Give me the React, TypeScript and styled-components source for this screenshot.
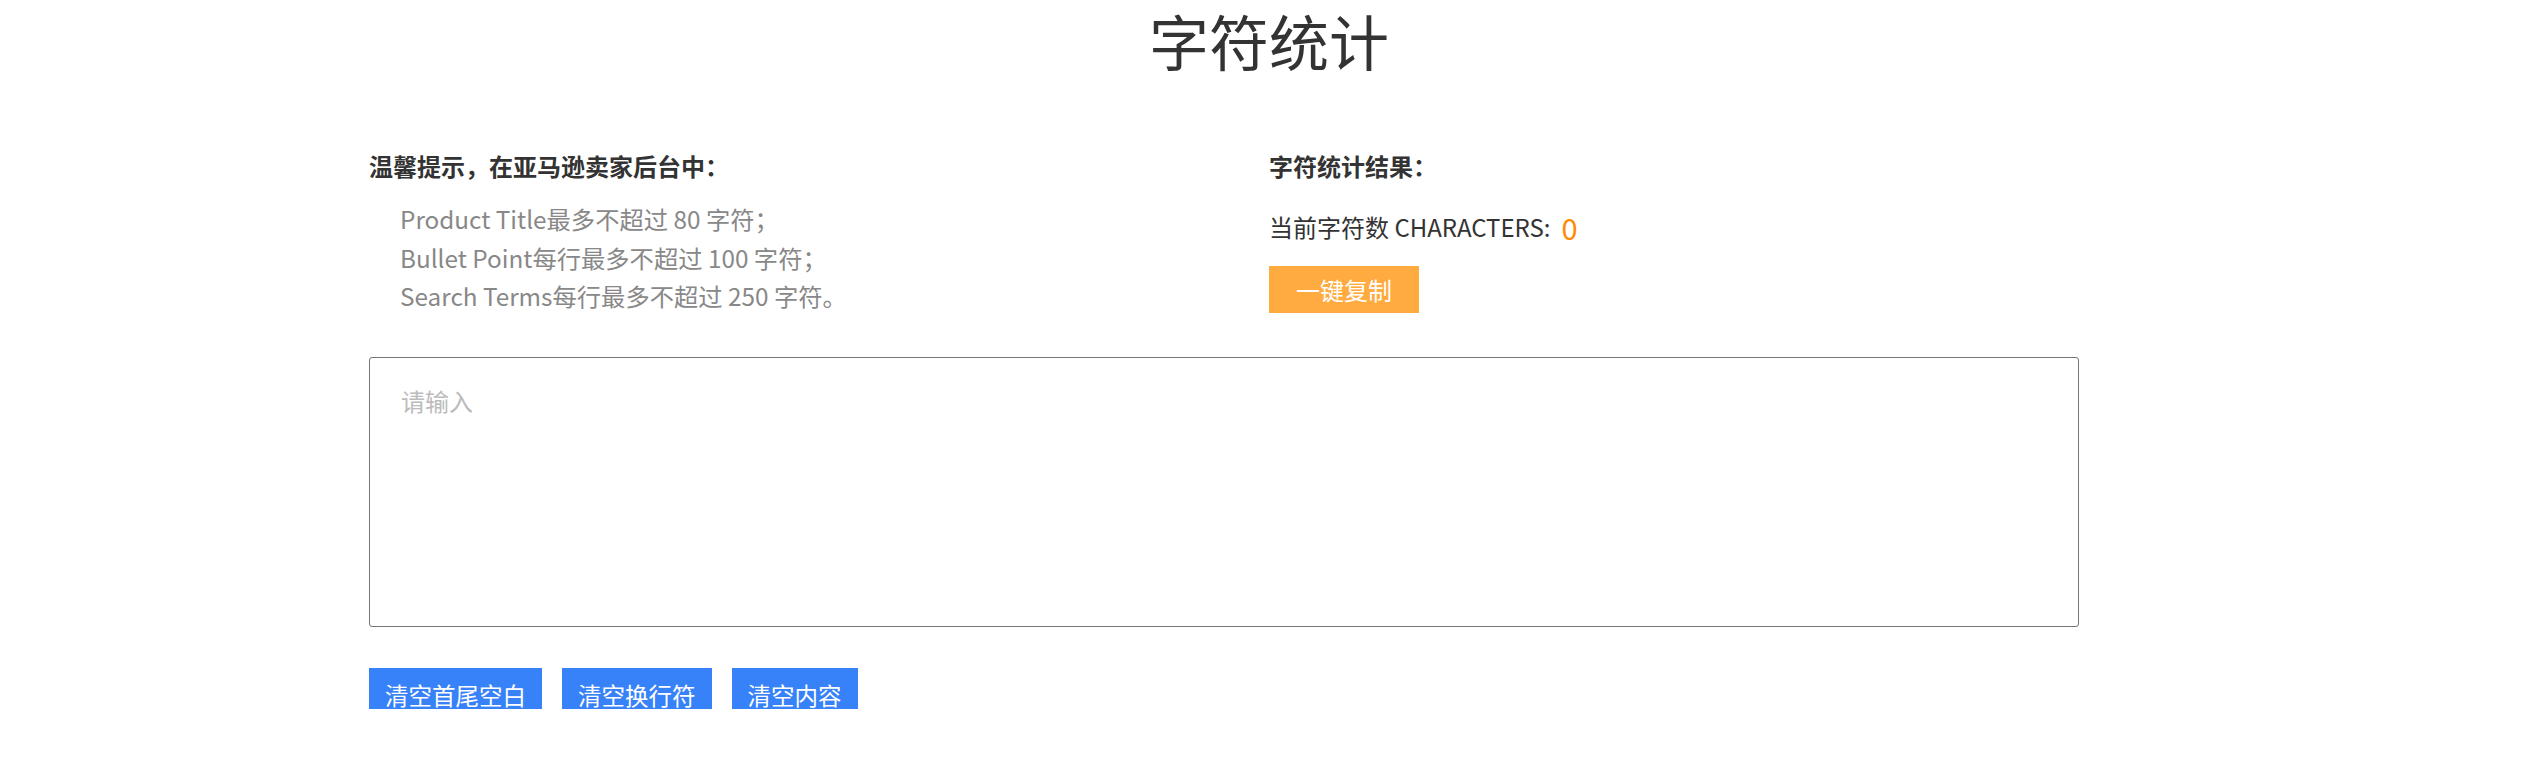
import React, { useState } from "react";
import styled, { createGlobalStyle } from "styled-components";

const GlobalStyle = createGlobalStyle`
  body {
    margin: 0;
    background: #fff;
    font-family: "Noto Sans CJK SC", "Noto Sans", sans-serif;
    color: #333;
  }
`;

const Title = styled.h1`
  margin: 0;
  text-align: center;
  font-size: 60px;
  font-weight: 400;
  line-height: 80px;
  color: #333;
`;

const Container = styled.div`
  width: 1800px;
  margin: 0 auto;
  padding-top: 69px;
`;

const InfoRow = styled.div`
  display: flex;
`;

const Column = styled.div`
  width: 50%;
`;

const Heading = styled.div`
  font-size: 24px;
  font-weight: 700;
  line-height: 34px;
  color: #333;
`;

const TipList = styled.div`
  margin-top: 17px;
  padding-left: 31px;
  font-size: 24.3px;
  line-height: 38.5px;
  color: #888;
`;

const CountLine = styled.div`
  margin-top: 27px;
  display: flex;
  align-items: center;
  font-size: 24px;
  line-height: 34px;
  color: #333;
`;

const CountValue = styled.span`
  margin-left: 11px;
  font-size: 29px;
  color: #ff8a00;
`;

const CopyButton = styled.button`
  margin-top: 22px;
  width: 150px;
  height: 47px;
  border: none;
  background: #ffab40;
  color: #fff;
  font-family: inherit;
  font-size: 24px;
  cursor: pointer;
`;

const TextArea = styled.textarea`
  display: block;
  box-sizing: border-box;
  margin-top: 41px;
  width: 95%;
  height: 270px;
  padding: 29px 31px;
  border: 1px solid #777;
  border-radius: 3px;
  resize: none;
  outline: none;
  font-family: inherit;
  font-size: 24px;
  line-height: 27px;
  color: #333;

  &::placeholder {
    color: #bbb;
  }
`;

const ActionBar = styled.div`
  display: flex;
  gap: 20px;
  margin-top: 41px;
`;

const ActionButton = styled.button`
  box-sizing: border-box;
  height: 41px;
  padding: 13px 16px 0;
  overflow: hidden;
  border: none;
  background: #3781f9;
  color: #fff;
  font-family: inherit;
  font-size: 23.5px;
  line-height: 28px;
  cursor: pointer;
`;

const App = () => {
  const [text, setText] = useState("");

  return (
    <>
      <GlobalStyle />
      <Title>字符统计</Title>
      <Container>
        <InfoRow>
          <Column>
            <Heading>温馨提示，在亚马逊卖家后台中：</Heading>
            <TipList>
              <div>Product Title最多不超过 80 字符；</div>
              <div>Bullet Point每行最多不超过 100 字符；</div>
              <div>Search Terms每行最多不超过 250 字符。</div>
            </TipList>
          </Column>
          <Column>
            <Heading>字符统计结果：</Heading>
            <CountLine>
              当前字符数 CHARACTERS:
              <CountValue>{text.length}</CountValue>
            </CountLine>
            <CopyButton onClick={() => navigator.clipboard?.writeText(text)}>一键复制</CopyButton>
          </Column>
        </InfoRow>
        <TextArea
          placeholder="请输入"
          value={text}
          onChange={(e) => setText(e.target.value)}
        />
        <ActionBar>
          <ActionButton onClick={() => setText(text.trim())}>清空首尾空白</ActionButton>
          <ActionButton onClick={() => setText(text.replace(/[\r\n]+/g, ""))}>清空换行符</ActionButton>
          <ActionButton onClick={() => setText("")}>清空内容</ActionButton>
        </ActionBar>
      </Container>
    </>
  );
};

export default App;
